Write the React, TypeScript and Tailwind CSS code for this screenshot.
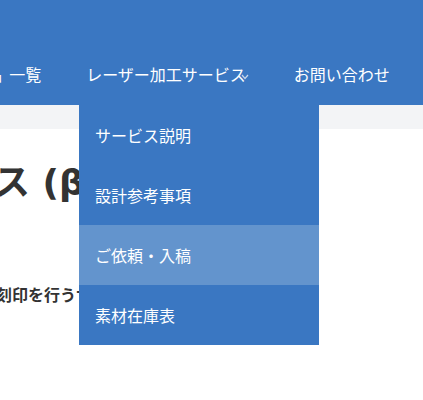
import React from 'react';

const font = { fontFamily: '"Noto Sans CJK JP", "Noto Sans", sans-serif' };
const headingFont = { fontFamily: '"DejaVu Sans", "Noto Sans CJK JP", sans-serif' };

export default function App() {
    const submenu = ['サービス説明', '設計参考事項', 'ご依頼・入稿', '素材在庫表'];
    return (
        <div className="relative w-[423px] h-[400px] overflow-hidden bg-white" style={font}>
            {/* Header */}
            <header className="h-[105px] bg-[#3a77c2] pt-[62px]">
                <nav className="flex items-center gap-[45px] ml-[-30px] text-white text-[16px] leading-[24px] whitespace-nowrap">
                    <span>作品&nbsp;&nbsp;一覧</span>
                    <span className="flex items-center">
                        レーザー加工サービス
                        <svg width="8" height="6" viewBox="0 0 8 6" className="ml-[-5px] mt-[6px]">
                            <polyline points="1,1 4,4.5 7,1" fill="none" stroke="#c9d6ea" strokeWidth="1.2" />
                        </svg>
                    </span>
                    <span>お問い合わせ</span>
                </nav>
            </header>

            {/* Breadcrumb strip */}
            <div className="h-[24px] bg-[#f3f4f6]" />

            {/* Content */}
            <main className="pt-[30px] whitespace-nowrap text-[#333]">
                <h1 className="ml-[-114px] text-[36px] leading-[48px] font-bold" style={headingFont}>
                    サービス (β版)
                </h1>
                <p className="mt-[75px] ml-[-52px] text-[16px] leading-[24px] font-bold">加工・刻印を行うサービスです。</p>
            </main>

            {/* Dropdown */}
            <div className="absolute left-[79px] top-[105px] w-[240px] bg-[#3a77c2] text-white">
                {submenu.map((label, i) => (
                    <div
                        key={label}
                        className={`h-[60px] flex items-center px-4 text-[16px] ${i === 2 ? 'bg-[#6394cd]' : ''}`}
                    >
                        {label}
                    </div>
                ))}
            </div>
        </div>
    );
}
